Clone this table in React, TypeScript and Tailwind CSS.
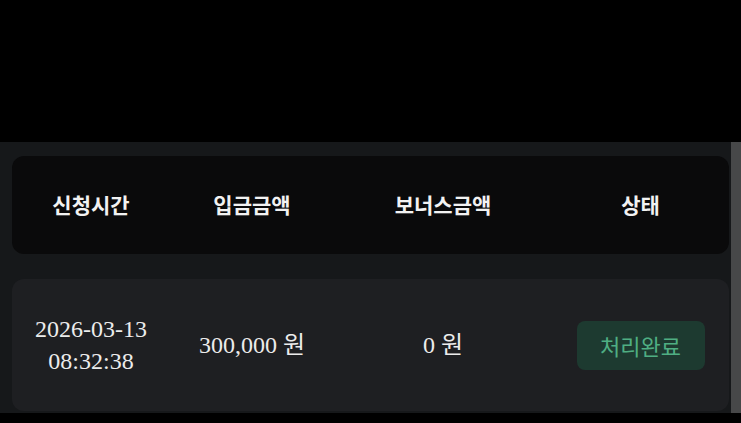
const rows = [
    { date: "2026-03-13", time: "08:32:38", amount: "300,000 원", bonus: "0 원", status: "처리완료" },
];

export default function App() {
    return (
        <div className="w-[741px] h-[423px] bg-black flex flex-col overflow-hidden">
            <div className="h-[142px] shrink-0" />
            <div className="h-[271px] flex bg-[#16181a]">
                <div className="flex-1 pl-3 pr-[2px] pt-[14px] flex flex-col gap-[25px]">
                    <div className="h-[98px] rounded-xl bg-[#0a0a0b] grid grid-cols-[158px_164px_218px_1fr] items-center text-[21px] font-bold text-[#f2f2f2] font-['Noto_Sans_CJK_KR',sans-serif]">
                        <div className="text-center">신청시간</div>
                        <div className="text-center">입금금액</div>
                        <div className="text-center">보너스금액</div>
                        <div className="text-center">상태</div>
                    </div>
                    {rows.map((r) => (
                        <div
                            key={r.date + r.time}
                            className="h-[132px] rounded-xl bg-[#1e1f22] grid grid-cols-[158px_164px_218px_1fr] items-center text-[24px] leading-8 text-[#ececec] font-['Liberation_Serif','Noto_Sans_CJK_KR',serif]"
                        >
                            <div className="text-center">
                                <div>{r.date}</div>
                                <div>{r.time}</div>
                            </div>
                            <div className="text-center">{r.amount}</div>
                            <div className="text-center">{r.bonus}</div>
                            <div className="flex justify-center">
                                <span className="w-[128px] h-[49px] rounded-lg bg-[#1d3a30] text-[#4fae83] flex items-center justify-center text-[22px] font-['Noto_Sans_CJK_KR',sans-serif]">
                                    {r.status}
                                </span>
                            </div>
                        </div>
                    ))}
                </div>
                <div className="w-[10px] bg-[#474849]" />
            </div>
        </div>
    );
}
